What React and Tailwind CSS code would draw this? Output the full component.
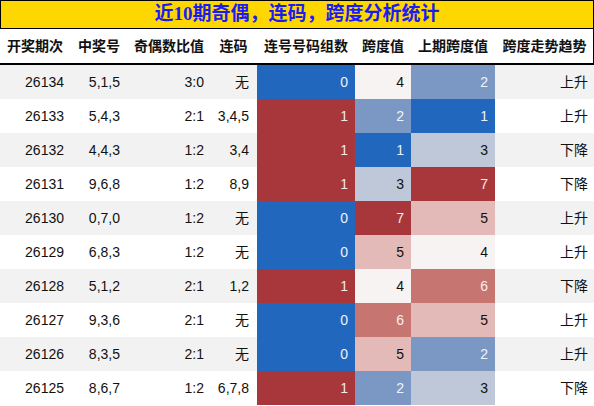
const rows = [
  ["26134", "5,1,5", "3:0", "无", 0, 4, 2, "上升"],
  ["26133", "5,4,3", "2:1", "3,4,5", 1, 2, 1, "上升"],
  ["26132", "4,4,3", "1:2", "3,4", 1, 1, 3, "下降"],
  ["26131", "9,6,8", "1:2", "8,9", 1, 3, 7, "下降"],
  ["26130", "0,7,0", "1:2", "无", 0, 7, 5, "上升"],
  ["26129", "6,8,3", "1:2", "无", 0, 5, 4, "上升"],
  ["26128", "5,1,2", "2:1", "1,2", 1, 4, 6, "下降"],
  ["26127", "9,3,6", "2:1", "无", 0, 6, 5, "上升"],
  ["26126", "8,3,5", "2:1", "无", 0, 5, 2, "上升"],
  ["26125", "8,6,7", "1:2", "6,7,8", 1, 2, 3, "下降"],
];

const heads = ["开奖期次", "中奖号", "奇偶数比值", "连码", "连号号码组数", "跨度值", "上期跨度值", "跨度走势趋势"];

// span value -> cell colour
const heat = {
  1: "bg-[#2267be] text-[#eef2f8]",
  2: "bg-[#7b98c4] text-[#f2f4f8]",
  3: "bg-[#bec8d8] text-[#111]",
  4: "bg-[#f8f3f3] text-[#111]",
  5: "bg-[#e3bab8] text-[#111]",
  6: "bg-[#c67570] text-[#f8eeee]",
  7: "bg-[#a8373c] text-[#f6e8e8]",
};

const grid = "grid grid-cols-[70px_58px_82px_47px_98px_56px_84px_99px]";

export default function App() {
  return (
    <div
      className="w-[594px] h-[406px] bg-white text-[14px] text-[#111] overflow-hidden"
      style={{ fontFamily: '"Liberation Sans", "Noto Sans CJK SC", sans-serif' }}
    >
      <div
        className="h-[29px] bg-[#ffd700] border border-black flex items-center justify-center text-[19px] font-bold text-[#1c1cf2]"
        style={{ fontFamily: '"Liberation Serif", "Noto Sans CJK SC", serif' }}
      >
        近10期奇偶，连码，跨度分析统计
      </div>
      <div className={`${grid} h-[36px] border-b-2 border-r border-black font-bold`}>
        {heads.map((h) => (
          <div key={h} className="flex items-center justify-center whitespace-nowrap">
            {h}
          </div>
        ))}
      </div>
      {rows.map((r, i) => (
        <div key={r[0]} className={`${grid} h-[34px] ${i % 2 === 0 ? "bg-[#f2f2f2]" : "bg-white"}`}>
          <div className="flex items-center justify-end pr-[6px]">{r[0]}</div>
          <div className="flex items-center justify-end pr-[8px]">{r[1]}</div>
          <div className="flex items-center justify-end pr-[6px]">{r[2]}</div>
          <div className="flex items-center justify-end pr-[8px]">{r[3]}</div>
          <div
            className={`flex items-center justify-end pr-[7px] ${
              r[4] === 0 ? "bg-[#2267be] text-[#eef2f8]" : "bg-[#a8373c] text-[#f6e8e8]"
            }`}
          >
            {r[4]}
          </div>
          <div className={`flex items-center justify-end pr-[7px] ${heat[r[5]]}`}>{r[5]}</div>
          <div className={`flex items-center justify-end pr-[7px] ${heat[r[6]]}`}>{r[6]}</div>
          <div className="flex items-center justify-end pr-[6px]">{r[7]}</div>
        </div>
      ))}
    </div>
  );
}
